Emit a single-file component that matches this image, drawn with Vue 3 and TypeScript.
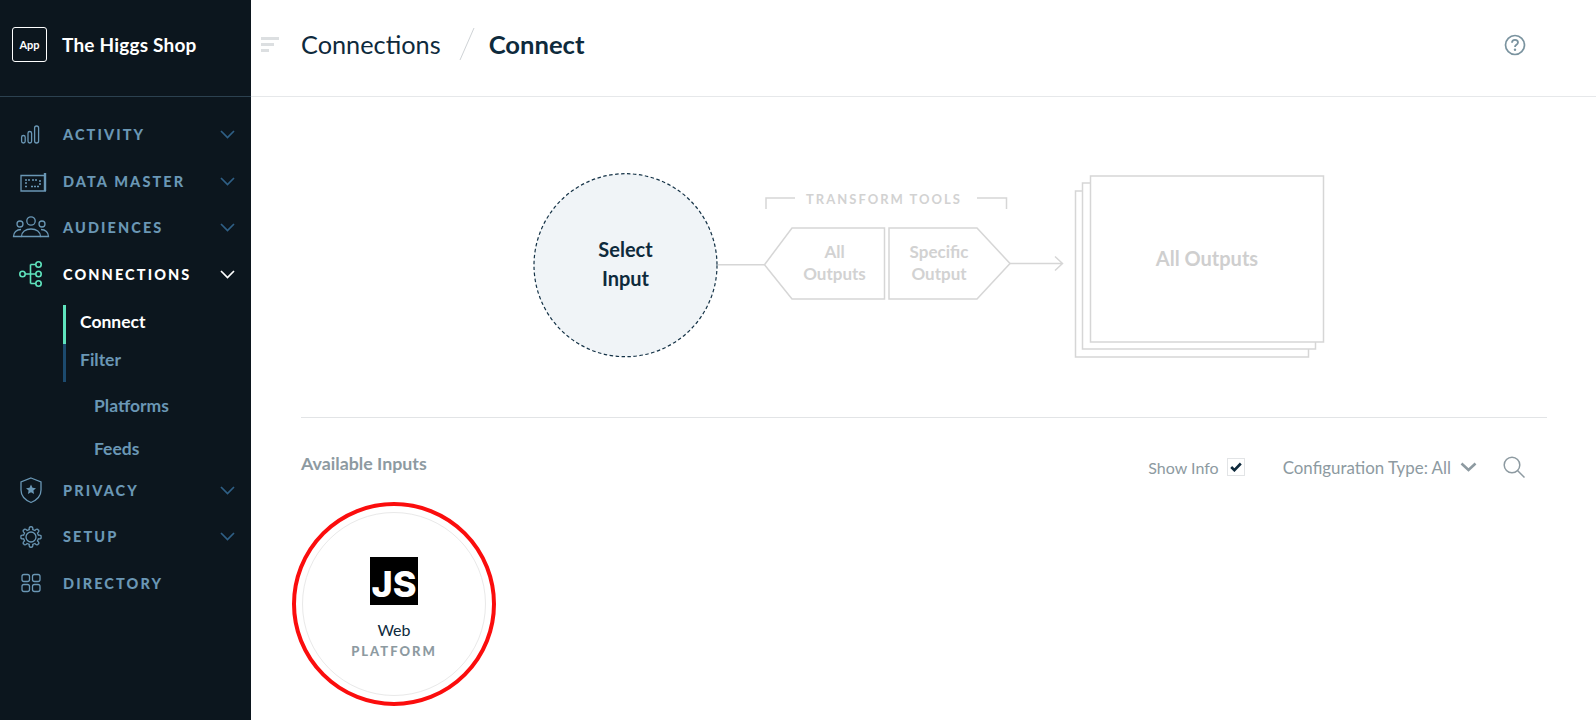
<script setup lang="ts">
interface NavRow { key: string; label: string; chevron: boolean; active?: boolean }
const topRows: NavRow[] = [
  { key: 'activity', label: 'ACTIVITY', chevron: true },
  { key: 'data', label: 'DATA MASTER', chevron: true },
  { key: 'audiences', label: 'AUDIENCES', chevron: true },
  { key: 'connections', label: 'CONNECTIONS', chevron: true, active: true },
]
const bottomRows: NavRow[] = [
  { key: 'privacy', label: 'PRIVACY', chevron: true },
  { key: 'setup', label: 'SETUP', chevron: true },
  { key: 'directory', label: 'DIRECTORY', chevron: false },
]

function gearPath(cx: number, cy: number, inner: number, outer: number, teeth: number): string {
  const parts: string[] = []
  const step = (Math.PI * 2) / teeth
  for (let i = 0; i < teeth; i++) {
    const a = i * step - Math.PI / 2
    const pt = (r: number, t: number) => `${(cx + r * Math.cos(t)).toFixed(2)} ${(cy + r * Math.sin(t)).toFixed(2)}`
    parts.push(`${i === 0 ? 'M' : 'L'}${pt(inner, a - step * 0.3)}`)
    parts.push(`C${pt(outer, a - step * 0.3)} ${pt(outer + 0.6, a - step * 0.1)} ${pt(outer, a)}`)
    parts.push(`C${pt(outer + 0.6, a + step * 0.1)} ${pt(outer, a + step * 0.3)} ${pt(inner, a + step * 0.3)}`)
  }
  return parts.join(' ') + 'Z'
}
const gear = gearPath(20, 15, 7.6, 10, 8)
</script>

<template>
  <div class="page">
    <aside class="sidebar">
      <div class="brand">
        <div class="logo">App</div>
        <div class="shop">The Higgs Shop</div>
      </div>
      <nav class="nav">
        <template v-for="group in [topRows, bottomRows]" :key="group[0].key">
          <div v-for="row in group" :key="row.key" class="row" :class="{ active: row.active }">
            <svg class="icon" width="40" height="30" viewBox="0 0 40 30" fill="none" stroke="currentColor" stroke-width="1.3">
              <g v-if="row.key === 'activity'">
                <rect x="10.6" y="15.5" width="3.6" height="7.5" rx="1.8" />
                <rect x="17" y="11.5" width="3.6" height="11.5" rx="1.8" />
                <rect x="23.6" y="6" width="4" height="17" rx="2" />
              </g>
              <g v-else-if="row.key === 'data'">
                <path d="M33 9.5H10v15.5H35" />
                <path d="M34 25V7" stroke-width="2.4" />
                <path d="M14 14h5M21 14h6M29 14v5M14 17h3M14 20.500h3M20 20.500h8" stroke-dasharray="2 1" stroke-width="1.500" />
              </g>
              <g v-else-if="row.key === 'audiences'">
                <circle cx="20" cy="8" r="4.2" />
                <circle cx="9" cy="11" r="3" />
                <circle cx="31" cy="11" r="3" />
                <path d="M10.5 23.5c0-4.5 4-7.5 9.5-7.5s9.500 3 9.500 7.500z" />
                <path d="M10 16.500c-4.500 0-7.500 3-7.500 7h8M30 16.500c4.500 0 7.500 3 7.500 7h-8" />
              </g>
              <g v-else-if="row.key === 'connections'" stroke-width="1.6">
                <circle cx="11.500" cy="15" r="2.700" />
                <circle cx="27.500" cy="5.500" r="2.700" />
                <circle cx="27.500" cy="15" r="2.700" />
                <circle cx="27.500" cy="24.500" r="2.700" />
                <path d="M14.200 15H24.800M19.500 5.500V24.500M19.500 5.500H24.800M19.500 24.500H24.800" />
              </g>
              <g v-else-if="row.key === 'privacy'">
                <path d="M20 3l10 4v8c0 5.500-4 10-10 12.500-6-2.500-10-7-10-12.500v-8z" />
                <path d="M20 9.500l1.500 3.300 3.500.4-2.600 2.400.7 3.500-3.100-1.800-3.100 1.800.7-3.500-2.600-2.400 3.500-.4z" fill="currentColor" stroke="none" />
              </g>
              <g v-else-if="row.key === 'setup'">
                <path :d="gear" />
                <circle cx="20" cy="15" r="5" />
              </g>
              <g v-else>
                <rect x="11" y="6.500" width="7.500" height="7" rx="2" />
                <rect x="21.500" y="6.500" width="7.500" height="7" rx="2" />
                <rect x="11" y="16.500" width="7.500" height="7" rx="2" />
                <rect x="21.500" y="16.500" width="7.500" height="7" rx="2" />
              </g>
            </svg>
            <span class="label">{{ row.label }}</span>
            <svg v-if="row.chevron" class="chev" width="15" height="9" viewBox="0 0 15 9" fill="none" stroke="currentColor" stroke-width="1.700">
              <path d="M1 1l6.500 6.500L14 1" />
            </svg>
          </div>
          <div v-if="group === topRows" :key="'sub'" class="sub">
            <div class="tabs">
              <div class="tab on">Connect</div>
              <div class="tab">Filter</div>
            </div>
            <div class="link first">Platforms</div>
            <div class="link">Feeds</div>
          </div>
        </template>
      </nav>
    </aside>

    <main class="main">
      <header class="header">
        <svg class="menu" width="18" height="15" viewBox="0 0 18 15">
          <rect x="0" y="0" width="18" height="3" fill="#dcdfe1" />
          <rect x="0" y="6" width="13" height="3" fill="#dcdfe1" />
          <rect x="0" y="12" width="8" height="3" fill="#dcdfe1" />
        </svg>
        <span class="crumb">Connections</span>
        <svg class="slash" width="16" height="34" viewBox="0 0 16 34"><path d="M15 1L1 33" stroke="#cfd3d6" stroke-width="1" /></svg>
        <span class="crumb strong">Connect</span>
        <svg class="help" width="22" height="22" viewBox="0 0 22 22" fill="none">
          <circle cx="11" cy="11" r="9.500" stroke="#7a939f" stroke-width="1.700" />
          <path d="M8 8.700c0-1.800 1.300-2.900 3-2.900s3 1.100 3 2.700c0 2.300-3 2.300-3 4.400" stroke="#7a939f" stroke-width="1.800" />
          <circle cx="11" cy="15.800" r="1.200" fill="#7a939f" />
        </svg>
      </header>

      <div class="content">
        <section class="diagram">
          <svg width="1246" height="320" viewBox="301 97 1246 320" fill="none">
            <circle cx="625.500" cy="265.200" r="91.500" fill="#f0f4f7" stroke="#143246" stroke-width="1.200" stroke-dasharray="3.500 2.500" />
            <text class="d-strong" x="625.500" y="257" text-anchor="middle">Select</text>
            <text class="d-strong" x="625.500" y="286" text-anchor="middle">Input</text>

            <g stroke="#d6d6d6" stroke-width="1.500">
              <path d="M718 264.700H764.500" />
              <path d="M764.500 264.700L792 228H884.500V299H792Z" />
              <path d="M889 228H977L1010 263.500L977 299H889Z" />
              <path d="M1010 263.500H1062M1055 256.500L1062.500 263.500L1055 270.500" />
              <path d="M766 209V198H795M977 198H1006.500V209" />
            </g>
            <text class="d-caption" x="884" y="203.500" text-anchor="middle">TRANSFORM TOOLS</text>
            <text class="d-muted" x="834.500" y="258" text-anchor="middle">All</text>
            <text class="d-muted" x="834.500" y="280" text-anchor="middle">Outputs</text>
            <text class="d-muted" x="939" y="258" text-anchor="middle">Specific</text>
            <text class="d-muted" x="939" y="280" text-anchor="middle">Output</text>

            <g stroke="#d6d6d6" stroke-width="1.500" fill="#fff">
              <rect x="1075.500" y="191" width="233" height="166" />
              <rect x="1082.500" y="183" width="233" height="166" />
              <rect x="1090.500" y="176" width="233" height="166" />
            </g>
            <text class="d-big" x="1207" y="266" text-anchor="middle">All Outputs</text>
          </svg>
        </section>

        <div class="toolbar">
          <div class="title">Available Inputs</div>
          <div class="tools">
            <span class="tool-text">Show Info</span>
            <span class="check">
              <svg width="12" height="10" viewBox="0 0 12 10" fill="none"><path d="M1.200 5l3.200 3.200L10.800 1.500" stroke="#0e2a3c" stroke-width="2.600" /></svg>
            </span>
            <span class="tool-text config">Configuration Type: All</span>
            <svg class="down" width="17" height="10" viewBox="0 0 17 10" fill="none"><path d="M1.500 1.500l7 6.500 7-6.500" stroke="#8d9aa1" stroke-width="2.600" /></svg>
            <svg class="search" width="22" height="22" viewBox="0 0 22 22" fill="none" stroke="#8d9aa1" stroke-width="1.500">
              <circle cx="9" cy="9" r="7.800" />
              <path d="M14.500 14.500L21.500 21.500" />
            </svg>
          </div>
        </div>

        <div class="card-ring">
          <div class="card">
            <div class="js"><span>JS</span></div>
            <div class="web">Web</div>
            <div class="platform">PLATFORM</div>
          </div>
        </div>
      </div>
    </main>
  </div>
</template>

<style>
body { background: #fff; }
</style>

<style scoped>
.page {
  display: flex;
  width: 1596px;
  height: 720px;
  overflow: hidden;
  font-family: Lato, "Open Sans", sans-serif;
  background: #fff;
}
.sidebar {
  width: 251px;
  flex: none;
  background: #0c161e;
  color: #6a97b5;
}
.brand {
  height: 97px;
  box-sizing: border-box;
  border-bottom: 1px solid #2c4150;
  display: flex;
  align-items: center;
  padding: 0 0 8px 12px;
  gap: 15px;
  color: #fff;
}
.logo {
  width: 35px;
  height: 35px;
  box-sizing: border-box;
  border: 1px solid #fff;
  border-radius: 3px;
  display: flex;
  align-items: center;
  justify-content: center;
  font-size: 11px;
  font-weight: 700;
}
.shop { font-size: 19px; font-weight: 700; letter-spacing: 0.2px; }
.nav {
  display: flex;
  flex-direction: column;
  gap: 6.67px;
  padding-top: 17.5px;
}
.row {
  height: 40px;
  display: flex;
  align-items: center;
  padding: 0 16px 0 11px;
}
.icon { flex: none; margin-right: 12px; }
.label {
  flex: 1;
  font-size: 14.5px;
  font-weight: 900;
  letter-spacing: 2.1px;
}
.chev { color: #2f5f85; flex: none; }
.row.active { color: #fff; }
.row.active .icon { color: #5fe3bd; }
.row.active .chev { color: #fff; }
.sub { padding-top: 4px; display: flex; flex-direction: column; margin-bottom: 0; }
.tabs { margin-left: 63px; }
.tab {
  height: 38.5px;
  box-sizing: border-box;
  border-left: 3px solid #1c4a6e;
  padding: 0 0 6px 14px;
  display: flex;
  align-items: center;
  font-size: 17.5px;
  font-weight: 700;
}
.tab.on { color: #fff; border-left-color: #5fe3bd; }
.link {
  height: 30px;
  margin-top: 13px;
  display: flex;
  align-items: center;
  padding-left: 94px;
  font-size: 17.5px;
  font-weight: 700;
}
.link.first { margin-top: 8.400px; }
.main { flex: 1; min-width: 0; }
.header {
  height: 97px;
  box-sizing: border-box;
  border-bottom: 1px solid #e6e8ea;
  display: flex;
  align-items: center;
  padding: 0 70px 8px 10px;
  color: #0e2a3c;
}
.menu { margin-right: 22px; }
.crumb { font-size: 25.3px; font-weight: 400; }
.crumb.strong { font-size: 25.6px; font-weight: 700; }
.slash { margin: 0 14px 0 18px; }
.help { margin: 2px 0 0 auto; }
.content { padding: 0 49px 0 50px; }
.diagram { height: 321px; border-bottom: 1px solid #e2e4e6; box-sizing: border-box; }
.diagram svg { display: block; }
.d-strong { font-size: 20px; font-weight: 700; fill: #0e2a3c; }
.d-caption { font-size: 13px; font-weight: 700; letter-spacing: 2px; fill: #d2d2d2; }
.d-muted { font-size: 17px; font-weight: 700; fill: #d2d2d2; }
.d-big { font-size: 20px; font-weight: 700; fill: #cfcfcf; }
.toolbar { display: flex; justify-content: space-between; height: 84px; }
.title { font-size: 17.8px; font-weight: 700; color: #8d9aa1; padding-top: 34px; }
.tools { display: flex; align-items: center; height: 22px; margin: 38px 22px 0 0; color: #8d9aa1; }
.tool-text { font-size: 16px; font-weight: 400; }
.check {
  width: 18px;
  height: 18px;
  flex: none;
  box-sizing: border-box;
  border: 1px solid #e2e4e6;
  margin-left: 8px;
  display: flex;
  align-items: center;
  justify-content: center;
}
.config { margin-left: 38px; font-size: 16.9px; }
.down { margin-left: 9px; }
.search { margin-left: 26px; }
.card-ring {
  width: 204px;
  height: 204px;
  box-sizing: border-box;
  border: 4px solid #fb0d0d;
  border-radius: 50%;
  margin-left: -9px;
  display: flex;
  align-items: center;
  justify-content: center;
}
.card {
  width: 184px;
  height: 184px;
  box-sizing: border-box;
  border: 1.5px solid #e9e9e9;
  border-radius: 50%;
  display: flex;
  flex-direction: column;
  align-items: center;
  padding-top: 44px;
}
.js {
  width: 48px;
  height: 48px;
  background: #000;
  color: #fff;
  display: flex;
  align-items: center;
  justify-content: center;
  font-family: Inter, sans-serif;
  font-weight: 800;
  font-size: 36px;
  line-height: 48px;
  padding-top: 6px;
  box-sizing: border-box;
}
.web { font-size: 16px; color: #0e2a3c; margin-top: 15px; line-height: 20px; }
.platform { font-size: 13px; font-weight: 900; letter-spacing: 2px; color: #8d9aa1; margin-top: 3px; }
</style>
